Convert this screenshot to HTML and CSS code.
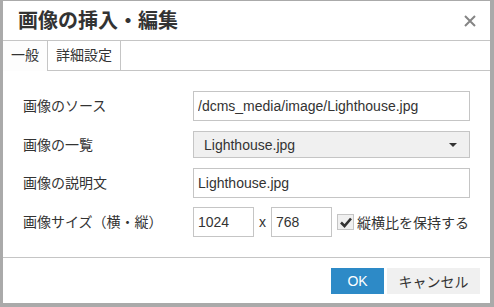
FILE: index.html
```html
<!DOCTYPE html>
<html lang="ja">
<head>
    <meta charset="UTF-8">
    <meta name="viewport" content="width=device-width, initial-scale=1.0">
    <title>画像の挿入・編集</title>
    <link rel="stylesheet" href="styles.css">
</head>
<body>
    <div class="dialog">
        <div class="dialog-head">
            <h1>画像の挿入・編集</h1>
            <button class="close" type="button" aria-label="閉じる">
                <svg width="12" height="12" viewBox="0 0 12 12">
                    <path d="M1 1 L11 11 M11 1 L1 11" stroke="#858585" stroke-width="2" fill="none"/>
                </svg>
            </button>
        </div>

        <div class="tabs">
            <div class="tab active">一般</div>
            <div class="tab">詳細設定</div>
        </div>

        <div class="form">
            <label class="label">画像のソース</label>
            <input class="textbox" type="text" value="/dcms_media/image/Lighthouse.jpg">

            <label class="label">画像の一覧</label>
            <div class="listbox">
                <span>Lighthouse.jpg</span>
                <i class="caret"></i>
            </div>

            <label class="label">画像の説明文</label>
            <input class="textbox" type="text" value="Lighthouse.jpg">

            <label class="label size-label">画像サイズ（横・縦）</label>
            <div class="size-row">
                <input class="textbox small" type="text" value="1024">
                <span class="times">x</span>
                <input class="textbox small" type="text" value="768">
                <span class="check">
                    <span class="check-box">
                        <svg width="14" height="14" viewBox="0 0 14 14">
                            <path d="M2 7.5 L5.5 11 L12 3.5" stroke="#333" stroke-width="2.6" fill="none"/>
                        </svg>
                    </span>
                    縦横比を保持する
                </span>
            </div>
        </div>

        <div class="dialog-foot">
            <button class="btn btn-ok" type="button">OK</button>
            <button class="btn btn-cancel" type="button">キャンセル</button>
        </div>
    </div>
</body>
</html>
```

FILE: styles.css
```css
body {
    margin: 0;
    padding: 1px 4px 4px 3px;
    background-color: #aaa;
    font-family: "Liberation Sans", "Noto Sans CJK JP", sans-serif;
    font-size: 14px;
    color: #333;
    height: 307px;
    box-sizing: border-box;
    overflow: hidden;
}

.dialog {
    background-color: #fff;
    height: 302px;
    display: flex;
    flex-direction: column;
}

.dialog-head {
    height: 39px;
    border-bottom: 1px solid #c5c5c5;
    display: flex;
    align-items: center;
    justify-content: space-between;
    padding: 0 14px 0 15px;
}

.dialog-head h1 {
    margin: 0;
    font-size: 20px;
    font-weight: bold;
    line-height: 24px;
    color: #333;
}

.close {
    border: none;
    background: none;
    padding: 0;
    width: 12px;
    height: 12px;
    display: flex;
}

.tabs {
    display: flex;
    height: 29px;
    border-bottom: 1px solid #c5c5c5;
}

.tab {
    padding: 0 8px;
    line-height: 29px;
    border-right: 1px solid #c5c5c5;
    background-color: #fff;
}

.tab.active {
    background-color: #fdfdfd;
    height: 30px;
}

.form {
    padding: 20px 20px 20px 20px;
    display: grid;
    grid-template-columns: 170px 1fr;
    row-gap: 10px;
    align-items: center;
}

.label {
    line-height: 16px;
}

.textbox {
    height: 30px;
    box-sizing: border-box;
    border: 1px solid #c5c5c5;
    padding: 0 4px;
    font-family: inherit;
    font-size: 14px;
    color: #333;
    width: 100%;
    margin: 0;
    outline: none;
}

.listbox {
    height: 27px;
    box-sizing: border-box;
    border: 1px solid #c5c5c5;
    background-color: #f0f0f0;
    display: flex;
    align-items: center;
    justify-content: space-between;
    padding: 0 12px 0 10px;
}

.caret {
    width: 0;
    height: 0;
    border-left: 4px solid transparent;
    border-right: 4px solid transparent;
    border-top: 4px solid #333;
}

.size-label,
.size-row {
    margin-top: -1px;
}

.size-row {
    display: flex;
    align-items: center;
}

.textbox.small {
    width: 61px;
}

.times {
    margin: 0 5px;
}

.check {
    display: flex;
    align-items: center;
    margin-left: 5px;
}

.check-box {
    width: 17px;
    height: 16px;
    box-sizing: border-box;
    border: 1px solid #c5c5c5;
    background-color: #f0f0f0;
    display: flex;
    align-items: center;
    justify-content: center;
    margin-right: 3px;
}

.dialog-foot {
    border-top: 1px solid #c5c5c5;
    flex-grow: 1;
    display: flex;
    justify-content: flex-end;
    align-items: flex-start;
    padding: 10px 10px 0 0;
    gap: 3px;
}

.btn {
    height: 26px;
    border: none;
    font-family: inherit;
    font-size: 14px;
    padding: 0;
}

.btn-ok {
    width: 53px;
    background-color: #2d8ac7;
    color: #fff;
}

.btn-cancel {
    width: 93px;
    background-color: #f0f0f0;
    color: #333;
}
```
